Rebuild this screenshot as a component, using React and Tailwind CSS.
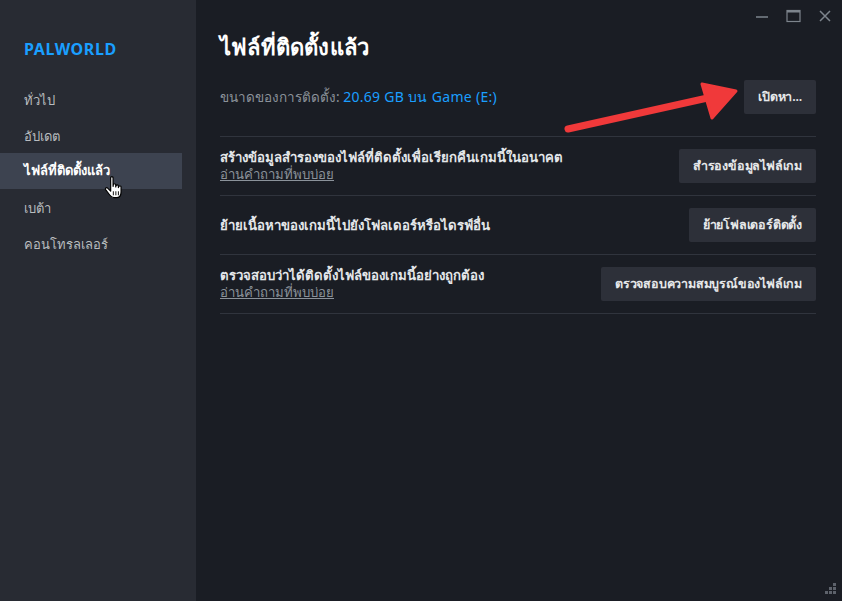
import React from "react";

const font = { fontFamily: '"Noto Sans", "Open Sans", "DejaVu Sans", sans-serif' };

const nav = ["ทั่วไป", "อัปเดต", "ไฟล์ที่ติดตั้งแล้ว", "เบต้า", "คอนโทรลเลอร์"];

function Btn({ children }) {
  return (
    <button className="h-[34px] shrink-0 rounded-[2px] bg-[#2d3039] px-[14px] text-[12.5px] font-semibold tracking-[-0.2px] text-[#e6e8ea]">
      {children}
    </button>
  );
}

function Row({ text, link, action }) {
  return (
    <div className="flex items-center justify-between border-b border-[#30343d] py-[12px]">
      <div className="flex flex-col">
        <span className="text-[13.2px] font-semibold leading-[17px] text-[#e4e7ea]">{text}</span>
        {link && (
          <a className="text-[13.2px] leading-[17px] text-[#8b929a] underline">{link}</a>
        )}
      </div>
      <Btn>{action}</Btn>
    </div>
  );
}

function HandCursor() {
  return (
    <svg width="20" height="24" viewBox="0 0 15 18" className="absolute left-[104px] top-[175px]">
      <path
        d="M5 2c0-1 1.8-1 1.8 0V8.5l.2-1.2c0-1 1.8-1 1.8 0V9l.2-.8c0-1 1.8-1 1.8 0v1.2l.2-.5c0-1 1.8-1 1.8 0v3.8c0 2.5-1.3 4.3-3.5 4.3H7.5c-1.5 0-2.3-.8-3.2-2L1.2 11c-.6-1 .6-2 1.5-1.2L5 12z"
        fill="#fff"
        stroke="#000"
        strokeWidth="0.9"
        strokeLinejoin="round"
      />
      <path d="M7 12.2v3M8.9 12.2v3M10.8 12.2v3" stroke="#000" strokeWidth="0.7" />
    </svg>
  );
}

export default function App() {
  return (
    <div className="relative flex h-[601px] w-[842px] overflow-hidden bg-[#1a1d24]" style={font}>
      <aside className="flex w-[196px] shrink-0 flex-col bg-[#282b33] pt-[37px]">
        <div className="px-6 text-[16px] font-bold tracking-[0.6px] text-[#1a9fff]">PALWORLD</div>
        <nav className="mt-[22px] flex flex-col">
          {nav.map((n, i) => (
            <div
              key={n}
              className={
                "mr-[14px] flex h-[36px] items-center px-6 text-[13px] " +
                (i === 2 ? "-mt-[2px] mb-[2px] bg-[#3d4350] font-semibold text-white" : "text-[#b8bcbf]")
              }
            >
              {n}
            </div>
          ))}
        </nav>
      </aside>

      <main className="flex-1 pl-6 pr-[26px] pt-[32px]">
        <h1 className="text-[22px] font-bold leading-[28px] tracking-[0.2px] text-white">ไฟล์ที่ติดตั้งแล้ว</h1>
        <div className="mt-[20px] flex items-center justify-between border-b border-[#30343d] pb-[22px]">
          <div className="flex items-baseline">
            <span className="text-[13.5px] text-[#8b929a]">ขนาดของการติดตั้ง:&nbsp;</span>
            <span className="text-[14px] tracking-[0.3px] text-[#1a9fff]">20.69 GB บน Game (E:)</span>
          </div>
          <Btn>เปิดหา...</Btn>
        </div>
        <Row
          text="สร้างข้อมูลสำรองของไฟล์ที่ติดตั้งเพื่อเรียกคืนเกมนี้ในอนาคต"
          link="อ่านคำถามที่พบบ่อย"
          action="สำรองข้อมูลไฟล์เกม"
        />
        <Row text="ย้ายเนื้อหาของเกมนี้ไปยังโฟลเดอร์หรือไดรฟ์อื่น" action="ย้ายโฟลเดอร์ติดตั้ง" />
        <Row
          text="ตรวจสอบว่าได้ติดตั้งไฟล์ของเกมนี้อย่างถูกต้อง"
          link="อ่านคำถามที่พบบ่อย"
          action="ตรวจสอบความสมบูรณ์ของไฟล์เกม"
        />
      </main>

      {/* window controls */}
      <div className="absolute right-[10px] top-[8px] flex items-center gap-[17px]">
        <svg width="14" height="16" viewBox="0 0 14 16"><path d="M1 9h12" stroke="#7d848c" strokeWidth="1.5" /></svg>
        <svg width="15" height="16" viewBox="0 0 15 16">
          <rect x="1" y="2.5" width="13" height="11" fill="none" stroke="#7d848c" strokeWidth="1.2" />
          <rect x="1" y="2.5" width="13" height="2" fill="#7d848c" />
        </svg>
        <svg width="14" height="16" viewBox="0 0 14 16"><path d="M2 3l10 10M12 3L2 13" stroke="#7d848c" strokeWidth="1.5" /></svg>
      </div>

      {/* resize grip */}
      <svg width="14" height="14" viewBox="0 0 14 14" className="absolute bottom-[5px] right-[5px]">
        {[[10, 1], [10, 5], [6, 5], [10, 9], [6, 9], [2, 9]].map(([x, y], i) => (
          <rect key={i} x={x} y={y} width="3" height="3" fill="#5d626b" />
        ))}
      </svg>

      {/* red arrow annotation */}
      <svg width="842" height="601" className="pointer-events-none absolute left-0 top-0">
        <line x1="568" y1="129" x2="712" y2="97" stroke="#f0393a" strokeWidth="7" strokeLinecap="round" />
        <polygon points="736,91 702,84 712,118" fill="#f0393a" strokeLinejoin="round" stroke="#f0393a" strokeWidth="3" />
      </svg>

      <HandCursor />
    </div>
  );
}
